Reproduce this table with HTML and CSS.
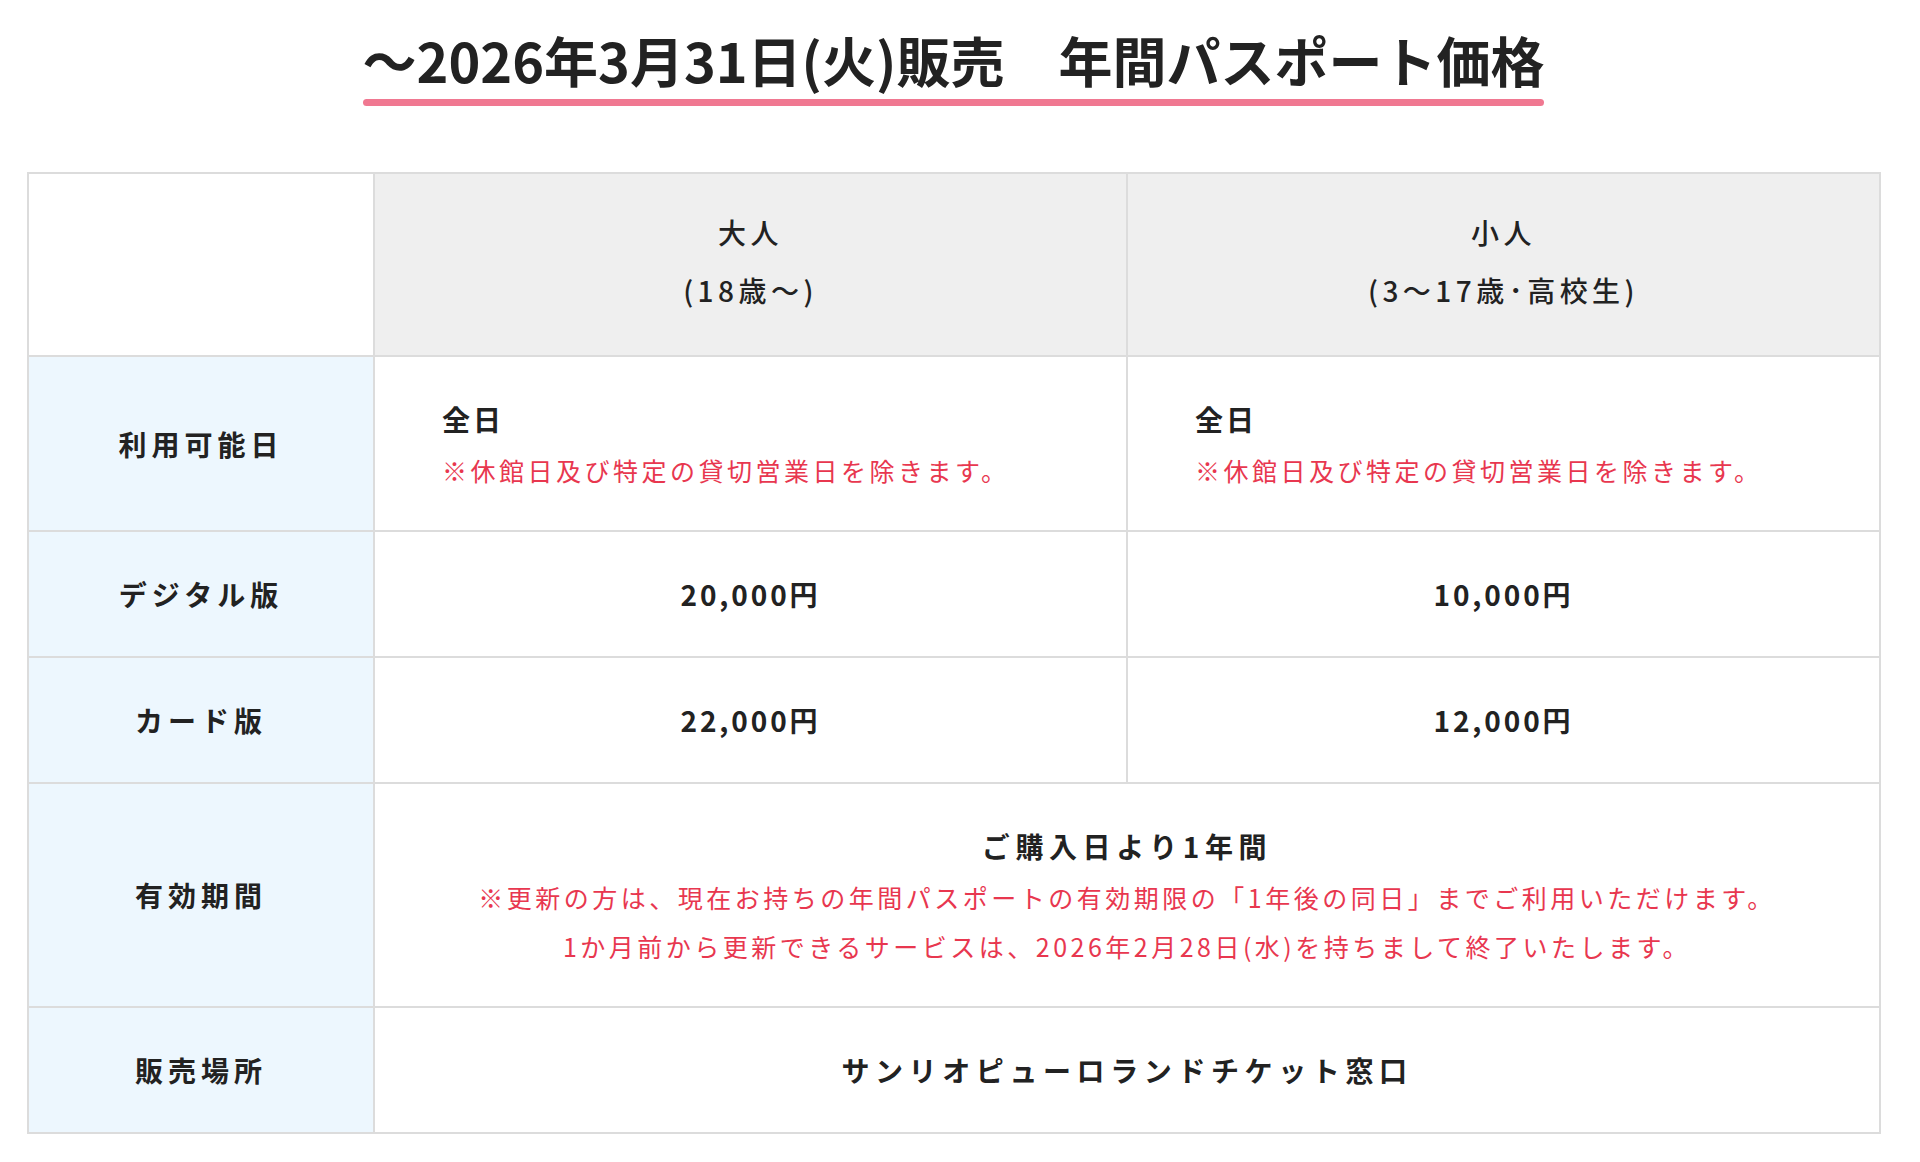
FILE: index.html
```html
<!DOCTYPE html>
<html lang="ja">
<head>
<meta charset="utf-8">
<title>年間パスポート価格</title>
<link rel="stylesheet" href="styles.css">
</head>
<body>
<div class="page">
  <div class="heading">
    <h2 class="title">～2026年3月31日(火)販売　年間パスポート価格</h2>
  </div>
  <table class="price">
    <colgroup>
      <col class="c-label">
      <col class="c-val">
      <col class="c-val">
    </colgroup>
    <thead>
      <tr>
        <th class="blank"></th>
        <th class="head">大人<br>(18歳～)</th>
        <th class="head">小人<br>(3～17歳･高校生)</th>
      </tr>
    </thead>
    <tbody>
      <tr>
        <th class="label">利用可能日</th>
        <td class="left"><span class="main">全日</span><span class="note">※休館日及び特定の貸切営業日を除きます。</span></td>
        <td class="left"><span class="main">全日</span><span class="note">※休館日及び特定の貸切営業日を除きます。</span></td>
      </tr>
      <tr>
        <th class="label">デジタル版</th>
        <td><span class="main">20,000円</span></td>
        <td><span class="main">10,000円</span></td>
      </tr>
      <tr>
        <th class="label">カード版</th>
        <td><span class="main">22,000円</span></td>
        <td><span class="main">12,000円</span></td>
      </tr>
      <tr>
        <th class="label">有効期間</th>
        <td colspan="2"><span class="main kana">ご購入日より1年間</span><span class="note">※更新の方は、現在お持ちの年間パスポートの有効期限の「1年後の同日」までご利用いただけます。</span><span class="note">1か月前から更新できるサービスは、2026年2月28日(水)を持ちまして終了いたします。</span></td>
      </tr>
      <tr>
        <th class="label">販売場所</th>
        <td colspan="2"><span class="main kana-wide">サンリオピューロランドチケット窓口</span></td>
      </tr>
    </tbody>
  </table>
</div>
</body>
</html>
```

FILE: styles.css
```css
html, body {
  margin: 0;
  padding: 0;
  background: #ffffff;
}

body {
  font-family: "Noto Sans CJK JP", "Noto Sans", sans-serif;
  color: #222222;
}

.page {
  width: 1853px;
  margin-left: 27px;
  padding-top: 20px;
}

.heading {
  display: flex;
  justify-content: center;
}

.title {
  margin: 0;
  font-size: 54px;
  font-weight: 700;
  line-height: 79px;
  letter-spacing: 0;
  color: #222222;
  display: flex;
  flex-direction: column;
}

.title::after {
  content: "";
  display: block;
  height: 7px;
  border-radius: 4px;
  background: #f07891;
}

.price {
  margin-top: 66px;
  width: 1853px;
  table-layout: fixed;
  border-collapse: collapse;
  border: 2px solid #dcdcdc;
}

.c-label { width: 346px; }
.c-val { width: 753px; }

.price th,
.price td {
  border: 2px solid #dcdcdc;
  padding: 35px 0;
  text-align: center;
  vertical-align: middle;
  letter-spacing: 0.18em;
}

.price th.blank {
  background: #ffffff;
}

.price th.head {
  background: #efefef;
  font-size: 28px;
  font-weight: 500;
  line-height: 58px;
  padding: 29px 0 36px;
  letter-spacing: 0.16em;
}

.price th.label {
  background: #edf7fe;
  font-size: 28px;
  font-weight: 700;
  line-height: 54px;
}

.price td.left {
  text-align: left;
  padding-left: 67px;
}

.main {
  display: block;
  font-size: 28px;
  font-weight: 700;
  line-height: 54px;
}

.main.kana {
  letter-spacing: 0.2em;
}

.main.kana-wide {
  letter-spacing: 0.2em;
}

.note {
  display: block;
  font-size: 25px;
  font-weight: 400;
  line-height: 49px;
  letter-spacing: 0.14em;
  color: #e8374f;
}
```
